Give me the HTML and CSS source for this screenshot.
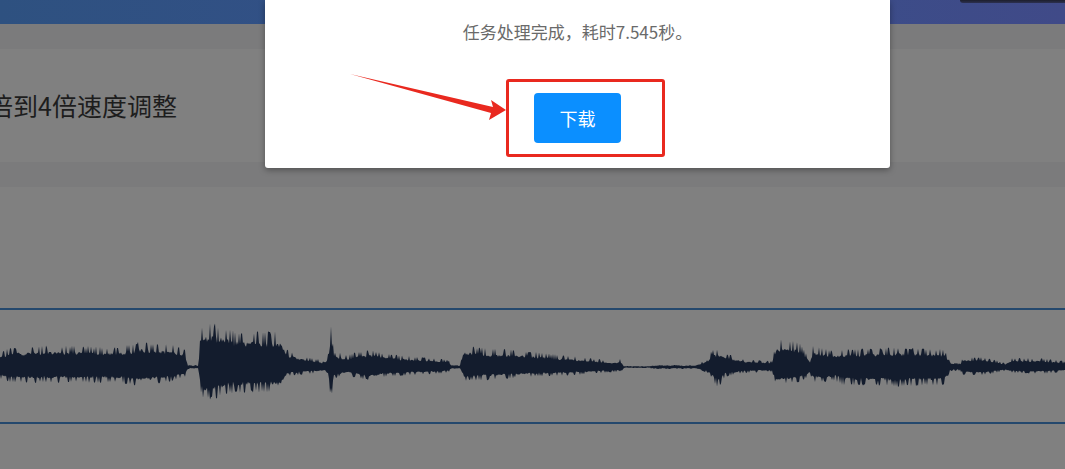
FILE: index.html
```html
<!DOCTYPE html>
<html lang="zh-CN">
<head>
<meta charset="utf-8">
<title>变速</title>
<link rel="stylesheet" href="styles.css">
</head>
<body>
<div class="page">
  <header class="topbar"><span class="topbar-edge"></span></header>
  <div class="band"></div>
  <section class="title-row">
    <h1 class="title">倍到4倍速度调整</h1>
  </section>
  <div class="band"></div>
  <section class="wave-area">
    <div class="wave-box">
      <svg class="wave" id="wave" viewBox="0 0 1065 112" preserveAspectRatio="none"></svg>
    </div>
  </section>
</div>

<div class="modal">
  <p class="modal-msg">任务处理完成，耗时7.545秒。</p>
  <div class="modal-actions">
    <button class="btn-download">下载</button>
  </div>
</div>

<div class="mark-box"></div>
<svg class="mark-arrow" width="170" height="60" viewBox="0 0 170 60">
  <polygon points="0,0 143,33 141,26 156,36 139,46 141,39" fill="#e9291f"/>
</svg>

<script src="wave.js"></script>
</body>
</html>
```

FILE: styles.css
```css
html, body {
  margin: 0;
  padding: 0;
  width: 1065px;
  height: 469px;
  overflow: hidden;
  background: #808080;
  font-family: "Noto Sans CJK SC", "Liberation Sans", sans-serif;
}

.page {
  display: flex;
  flex-direction: column;
  height: 469px;
}

.topbar {
  height: 24px;
  background: linear-gradient(90deg, #2e5180 0%, #35508a 50%, #404a88 100%);
  position: relative;
  flex: none;
}

.topbar-edge {
  position: absolute;
  top: 0;
  left: 960px;
  width: 110px;
  height: 3px;
  border-radius: 0 0 0 3px;
  background: linear-gradient(180deg, #1d1f2c, #2c3050);
}

.band {
  height: 25px;
  background: #7b7b7c;
  flex: none;
}

.title-row {
  height: 113px;
  display: flex;
  align-items: center;
  flex: none;
}

.title {
  margin: 0 0 0 -12px;
  font-size: 25px;
  font-weight: normal;
  color: #1d1d1d;
  white-space: nowrap;
  line-height: 1;
}

.wave-area {
  flex: 1;
  padding-top: 121px;
}

.wave-box {
  height: 112px;
  border-top: 2px solid #24486d;
  border-bottom: 2px solid #24486d;
}

.wave {
  display: block;
  width: 1065px;
  height: 112px;
}

.modal {
  position: absolute;
  top: 0;
  left: 265px;
  width: 625px;
  height: 168px;
  background: #fff;
  border-radius: 0 0 3px 3px;
  box-shadow: 0 2px 6px rgba(0, 0, 0, 0.35);
  display: flex;
  flex-direction: column;
  align-items: center;
}

.modal-msg {
  margin: 20px 0 0;
  font-size: 17px;
  line-height: 24px;
  color: #6a6a6a;
}

.modal-actions {
  margin-top: 49px;
}

.btn-download {
  width: 87px;
  height: 50px;
  border: none;
  border-radius: 4px;
  background: #0b8fff;
  color: #fff;
  font-family: "Noto Sans CJK SC", "Liberation Sans", sans-serif;
  font-size: 18px;
  padding: 0;
}

.mark-box {
  position: absolute;
  left: 506px;
  top: 79px;
  width: 153px;
  height: 72px;
  border: 3px solid #e9291f;
  border-radius: 3px;
}

.mark-arrow {
  position: absolute;
  left: 350px;
  top: 74px;
}
```

FILE: wave.js
```js
(function () {
  var svg = document.getElementById('wave');
  // envelope: [x, top amplitude, bottom amplitude]
  var env = [
    [0, 14, 12], [10, 20, 16], [60, 22, 16], [120, 20, 16], [140, 26, 20],
    [175, 22, 14], [185, 18, 10], [188, 2, 2], [198, 2, 2], [201, 40, 28],
    [205, 46, 34], [215, 44, 32], [235, 36, 26], [280, 36, 26], [287, 18, 10],
    [300, 12, 8], [318, 8, 6], [325, 5, 5], [328, 14, 10], [331, 44, 34],
    [334, 16, 12], [348, 12, 8], [352, 14, 10], [370, 18, 14], [385, 14, 10],
    [420, 10, 8], [448, 8, 6], [452, 2, 2], [460, 2, 2], [464, 22, 14],
    [480, 20, 14], [530, 16, 10], [580, 10, 8], [616, 6, 5], [620, 9, 6],
    [624, 1, 1], [650, 1, 1], [652, 2, 2], [695, 2, 2], [708, 8, 6],
    [712, 18, 12], [718, 18, 22], [725, 14, 10], [745, 8, 6], [772, 6, 5],
    [776, 26, 18], [785, 30, 18], [800, 24, 16], [810, 8, 8], [813, 22, 16],
    [835, 16, 14], [842, 18, 18], [900, 20, 20], [945, 18, 18], [950, 5, 4],
    [960, 4, 4], [963, 10, 8], [985, 10, 8], [1005, 4, 4], [1012, 9, 6],
    [1040, 9, 7], [1065, 6, 5]
  ];
  function envAt(x) {
    for (var i = 0; i < env.length - 1; i++) {
      var a = env[i], b = env[i + 1];
      if (x >= a[0] && x <= b[0]) {
        var t = (x - a[0]) / (b[0] - a[0] || 1);
        return [a[1] + (b[1] - a[1]) * t, a[2] + (b[2] - a[2]) * t];
      }
    }
    return [5, 5];
  }
  var seed = 12345;
  function rnd() {
    seed = (seed * 1103515245 + 12345) & 0x7fffffff;
    return seed / 0x7fffffff;
  }
  var cy = 57;
  var top = [], bot = [];
  for (var x = 0; x <= 1065; x += 1) {
    var e = envAt(x);
    var r1 = rnd(), r2 = rnd();
    var kt = r1 > 0.72 ? 0.9 + 0.1 * rnd() : 0.55 + 0.22 * r1;
    var kb = r2 > 0.72 ? 0.9 + 0.1 * rnd() : 0.55 + 0.22 * r2;
    top.push(x + ',' + (cy - e[0] * kt).toFixed(1));
    bot.push(x + ',' + (cy + e[1] * kb).toFixed(1));
  }
  var pts = top.concat(bot.reverse()).join(' ');
  var ns = 'http://www.w3.org/2000/svg';
  var poly = document.createElementNS(ns, 'polygon');
  poly.setAttribute('points', pts);
  poly.setAttribute('fill', '#131c2d');
  svg.appendChild(poly);
})();
```
